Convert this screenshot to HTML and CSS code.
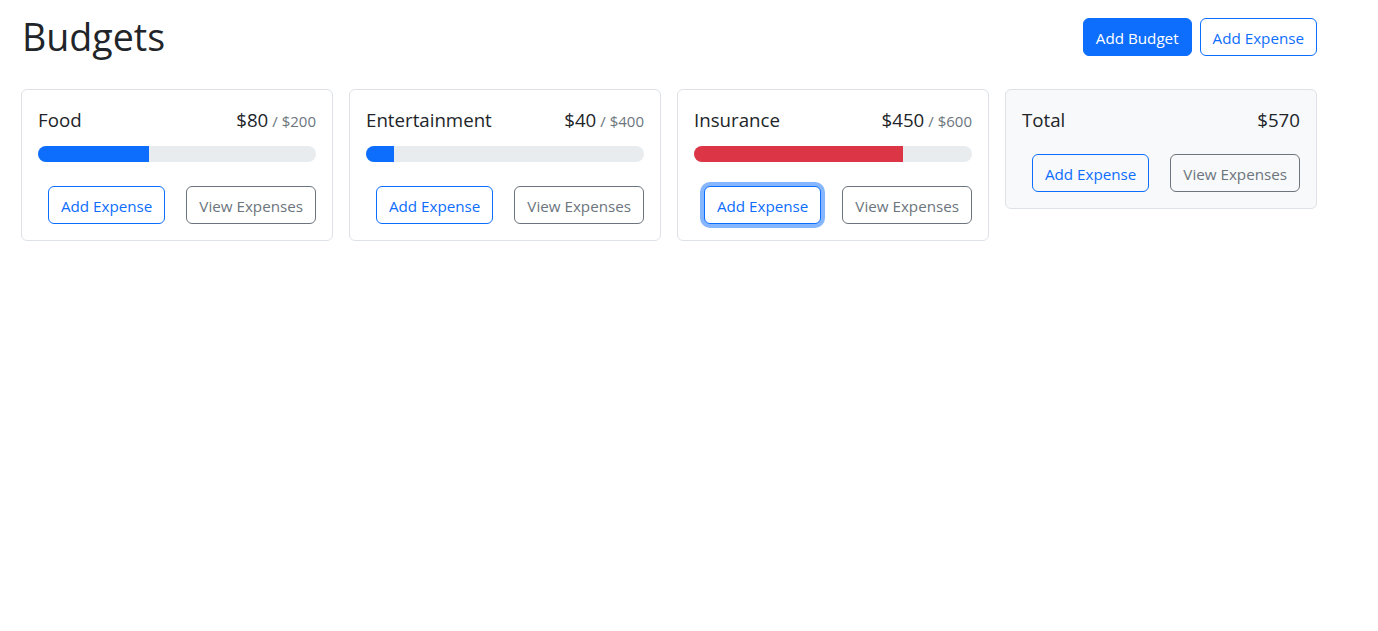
FILE: index.html
```html
<!DOCTYPE html>
<html lang="en">
<head>
<meta charset="utf-8">
<title>Budgets</title>
<link rel="stylesheet" href="styles.css">
</head>
<body>
<div class="container">
  <header class="header">
    <h1 class="title">Budgets</h1>
    <div class="actions">
      <button class="btn btn-primary">Add Budget</button>
      <button class="btn btn-outline-primary">Add Expense</button>
    </div>
  </header>
  <div class="grid">
    <div class="card">
      <div class="card-title">
        <span class="name">Food</span>
        <span class="amount">$80<span class="max">/ $200</span></span>
      </div>
      <div class="progress"><div class="bar" style="width:40%"></div></div>
      <div class="stack">
        <button class="btn btn-outline-primary">Add Expense</button>
        <button class="btn btn-outline-secondary">View Expenses</button>
      </div>
    </div>
    <div class="card">
      <div class="card-title">
        <span class="name">Entertainment</span>
        <span class="amount">$40<span class="max">/ $400</span></span>
      </div>
      <div class="progress"><div class="bar" style="width:10%"></div></div>
      <div class="stack">
        <button class="btn btn-outline-primary">Add Expense</button>
        <button class="btn btn-outline-secondary">View Expenses</button>
      </div>
    </div>
    <div class="card">
      <div class="card-title">
        <span class="name">Insurance</span>
        <span class="amount">$450<span class="max">/ $600</span></span>
      </div>
      <div class="progress"><div class="bar bar-danger" style="width:75%"></div></div>
      <div class="stack">
        <button class="btn btn-outline-primary focused">Add Expense</button>
        <button class="btn btn-outline-secondary">View Expenses</button>
      </div>
    </div>
    <div class="card card-light">
      <div class="card-title total-title">
        <span class="name">Total</span>
        <span class="amount">$570</span>
      </div>
      <div class="stack">
        <button class="btn btn-outline-primary">Add Expense</button>
        <button class="btn btn-outline-secondary">View Expenses</button>
      </div>
    </div>
  </div>
</div>
</body>
</html>
```

FILE: styles.css
```css
* { box-sizing: border-box; }
body {
  margin: 0;
  font-family: "Open Sans", "Noto Sans", sans-serif;
  font-size: 16px;
  line-height: 1.5;
  color: #212529;
  background: #fff;
}
.container {
  width: 1296px;
  margin-left: 21px;
  padding-top: 13px;
}
.header {
  display: flex;
  align-items: center;
  justify-content: space-between;
  height: 48px;
  margin-bottom: 28px;
}
.title {
  margin: 0 0 0 1px;
  font-size: 37.6px;
  font-weight: 400;
  line-height: 48px;
}
.actions {
  display: flex;
  gap: 8px;
}
.grid {
  display: grid;
  grid-template-columns: repeat(4, 1fr);
  gap: 16px;
  align-items: start;
}
.card {
  border: 1px solid #dee2e6;
  border-radius: 6px;
  padding: 16px;
  background: #fff;
}
.card-light { background: #f8f9fa; }
.card-title {
  display: flex;
  justify-content: space-between;
  align-items: baseline;
  font-size: 18.7px;
  line-height: 24px;
  padding-top: 2px;
  height: 24px;
  margin-bottom: 16px;
}
.total-title { margin-bottom: 24px; }
.max {
  font-size: 15px;
  color: #6c757d;
  margin-left: 4px;
}
.progress {
  height: 16px;
  background: #e9ecef;
  border-radius: 8px;
  overflow: hidden;
  display: flex;
  margin-bottom: 24px;
}
.bar { background: #0d6efd; height: 100%; }
.bar-danger { background: #dc3545; }
.stack {
  display: flex;
  justify-content: flex-end;
  gap: 21px;
}
.btn {
  font-family: inherit;
  font-size: 15.2px;
  line-height: 24px;
  padding: 7px 12px 5px;
  border: 1px solid transparent;
  border-radius: 6px;
  background: transparent;
  cursor: pointer;
  height: 38px;
  white-space: nowrap;
}
.btn-primary { background: #0d6efd; border-color: #0d6efd; color: #fff; }
.btn-outline-primary { border-color: #0d6efd; color: #0d6efd; background: #fff; }
.btn-outline-secondary { border-color: #6c757d; color: #6c757d; background: #fff; }
.card-light .btn { background: transparent; }
.focused { box-shadow: 0 0 0 4px rgba(13, 110, 253, 0.5); }
```
